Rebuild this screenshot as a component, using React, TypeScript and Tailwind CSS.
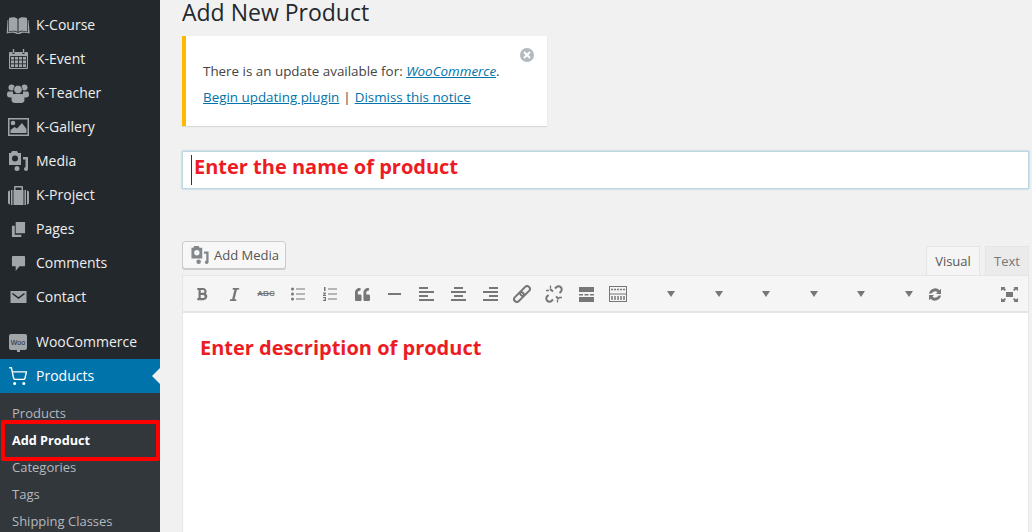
import type { ReactNode } from "react";
import { FaBold, FaItalic, FaQuoteLeft } from "react-icons/fa";
import { ShoppingCart } from "lucide-react";

const OPEN_SANS = "font-['Open_Sans',sans-serif]";

function MediaIcon({ className }: { className?: string }) {
	return (
		<svg viewBox="0 0 19 20" className={className} fill="currentColor">
			<path fillRule="evenodd" d="M3 0h5l1 2h3v12H0V2h2zM6 4.500a3 3 0 1 0 0 6 3 3 0 0 0 0-6z" />
			<path d="M14 6h5v12a2 2 0 1 1-2.500-2V8.500H14z" />
			<circle cx="8" cy="17.500" r="2.500" />
		</svg>
	);
}

function BookIcon() {
	return (
		<svg viewBox="0 0 24 17" className="w-[24px] h-[17px]" fill="currentColor">
			<path d="M3 1c3-1 7-1 8.500 1v13C10 13.500 6 13.500 3 14.500z" />
			<path d="M21 1c-3-1-7-1-8.500 1v13c1.500-1.500 5.500-1.500 8.500-.500z" />
			<path d="M1.500 3H2.300v12.200c3-1 7-1 9.700.800 2.700-1.800 6.700-1.800 9.700-.800V3h.800l1.200 13.500c-4-1-8-.800-10 .500h-3c-2-1.300-6-1.500-10-.500z" />
		</svg>
	);
}

function CalendarIcon() {
	return (
		<svg viewBox="0 0 19 20" className="w-[19px] h-[20px]">
			<path fill="currentColor" d="M1 3h2.500v2h2V3h8v2h2V3H18a1 1 0 0 1 1 1v15a1 1 0 0 1-1 1H1a1 1 0 0 1-1-1V4a1 1 0 0 1 1-1z" />
			<path fill="currentColor" d="M3.800 0h1.400v4H3.800zM13.800 0h1.400v4h-1.400z" />
			<path fill="none" stroke="#23282d" strokeWidth="0.900" d="M1.500 7.500h16v11h-16zM1.500 11h16M1.500 14.800h16M5.500 7.500v11M9.500 7.500v11M13.500 7.500v11" />
		</svg>
	);
}

function UsersIcon() {
	return (
		<svg viewBox="0 0 22 19" className="w-[22px] h-[19px]" fill="currentColor">
			<circle cx="4.500" cy="3.500" r="3" />
			<circle cx="17.500" cy="3.500" r="3" />
			<path d="M1.500 7.500h4.500v6H3c-2 0-3-1-3-2.500 0-2 .5-3.500 1.500-3.500zM16 7.500h4.500c1 0 1.500 1.500 1.500 3.500 0 1.500-1 2.500-3 2.500h-3z" />
			<circle cx="11" cy="5.500" r="4.300" stroke="#23282d" strokeWidth="0.800" />
			<path d="M6.800 10h8.400c1.500 0 2.300 2 2.300 5.500 0 2-1 3.500-3.500 3.500H8c-2.500 0-3.500-1.500-3.500-3.500C4.500 12 5.300 10 6.800 10z" />
		</svg>
	);
}

function GalleryIcon() {
	return (
		<svg viewBox="0 0 21 18" className="w-[21px] h-[18px]" fill="currentColor">
			<path fillRule="evenodd" d="M0 0h21v18H0zM1.500 1.500v15h18v-15z" />
			<circle cx="5" cy="5" r="2.300" />
			<path d="M2.500 15v-3l4-3 2.500 1.500L14 5l4.500 6v4z" />
		</svg>
	);
}

function SuitcaseIcon() {
	return (
		<svg viewBox="0 0 21 19" className="w-[21px] h-[19px]" fill="currentColor">
			<path fillRule="evenodd" d="M7 0h7a1 1 0 0 1 1 1v3h-1.500V1.500h-6V4H6V1a1 1 0 0 1 1-1z" />
			<path d="M5.500 4h10v15h-10zM3 4h1.500v15H3zM16.500 4H18v15h-1.500z" />
			<path d="M2 4.500v14C.7 18.500 0 17.800 0 16.500v-10C0 5.200.7 4.500 2 4.500zM19 4.500v14c1.300 0 2-.7 2-2v-10c0-1.300-.7-2-2-2z" />
		</svg>
	);
}

function PagesIcon() {
	return (
		<svg viewBox="0 0 16 18" className="w-[15px] h-[17px]" fill="currentColor">
			<path d="M5 1h10v12H5z" />
			<path d="M1 5h3v9.500h7V17H1z" />
		</svg>
	);
}

function CommentIcon() {
	return (
		<svg viewBox="0 0 16 18" className="w-[15px] h-[17px]" fill="currentColor">
			<path d="M2 1h12a1 1 0 0 1 1 1v9a1 1 0 0 1-1 1H9l-4 5v-5H2a1 1 0 0 1-1-1V2a1 1 0 0 1 1-1z" />
		</svg>
	);
}

function MailIcon() {
	return (
		<svg viewBox="0 0 16 12" className="w-[17px] h-[12px]">
			<rect width="16" height="12" fill="currentColor" />
			<path d="M2 2.500l6 4.500 6-4.500" fill="none" stroke="#23282d" strokeWidth="1.500" />
		</svg>
	);
}

function WooIcon() {
	return (
		<div className="relative w-[18px] h-[16px] rounded-[2px] bg-[#a0a5aa] flex items-center justify-center">
			<span className="text-[7px] leading-none text-[#23282d] font-['Liberation_Sans',sans-serif]">Woo</span>
			<span className="absolute left-[8px] -bottom-[2px] w-[3px] h-[3px] bg-[#a0a5aa]" />
		</div>
	);
}

function MenuItem({ icon, label, active }: { icon: ReactNode; label: string; active?: boolean }) {
	return (
		<div className={`relative h-[34px] flex items-center ${active ? "bg-[#0073aa] text-white" : "text-[#eeeeee]"}`}>
			<div className={`w-[36px] flex justify-center pl-[3px] pr-[3px] ${active ? "text-white" : "text-[#a0a5aa]"}`}>{icon}</div>
			<span className="text-[14px] leading-none">{label}</span>
			{active && (
				<span className="absolute right-0 top-[9px] border-y-[8px] border-r-[8px] border-y-transparent border-r-[#f1f1f1]" />
			)}
		</div>
	);
}

function SubItem({ label, bold }: { label: string; bold?: boolean }) {
	return (
		<div className={`h-[27px] pl-[12px] flex items-center ${bold ? "text-[12.7px] font-bold text-white" : "text-[13px] text-[#b4b9be]"}`}>
			{label}
		</div>
	);
}

function Lines({ align }: { align: "left" | "center" | "right" }) {
	return (
		<svg viewBox="0 0 15 14" className="w-[15px] h-[14px]" stroke="currentColor" strokeWidth="2" fill="none">
			<path d={align === "left" ? "M0 1h9M0 9h9" : align === "center" ? "M3 1h9M3 9h9" : "M6 1h9M6 9h9"} />
			<path d="M0 5h15M0 13h15" />
		</svg>
	);
}

function BulletList() {
	return (
		<svg viewBox="0 0 14 14" className="w-[14px] h-[14px]" fill="currentColor">
			<circle cx="1.500" cy="2" r="1.500" />
			<circle cx="1.500" cy="7" r="1.500" />
			<circle cx="1.500" cy="12" r="1.500" />
			<path d="M5 1.500h9v1H5zM5 6.500h9v1H5zM5 11.500h9v1H5z" />
		</svg>
	);
}

function NumberList() {
	return (
		<svg viewBox="0 0 14 14" className="w-[14px] h-[14px]" fill="currentColor">
			<path d="M1 0h1.500v4H1zM0 5.500h3v1L1.500 8H3v1H0V8l1.500-1.500H0zM0 10h3v4H0v-1h2v-.5H.8v-.8H2V11H0z" />
			<path d="M5 1.500h9v1H5zM5 6.500h9v1H5zM5 11.500h9v1H5z" />
		</svg>
	);
}

function LinkIcon() {
	return (
		<svg viewBox="0 0 18 18" className="w-[18px] h-[18px]" fill="none" stroke="currentColor" strokeWidth="2">
			<g transform="rotate(-45 9 9)">
				<rect x="-1" y="6.200" width="11.500" height="5.600" rx="2.800" />
				<rect x="7.500" y="6.200" width="11.500" height="5.600" rx="2.800" />
			</g>
		</svg>
	);
}

function UnlinkIcon() {
	return (
		<svg viewBox="0 0 18 18" className="w-[18px] h-[18px]" fill="none" stroke="currentColor" strokeWidth="2">
			<path d="M10 3.500l1.300-1.300a3 3 0 0 1 4.500 4.500L14.500 8" />
			<path d="M8 14.500l-1.300 1.300a3 3 0 0 1-4.500-4.500L3.500 10" />
			<path d="M8 6.500L5 4M11 11.500l3 2.500" />
			<path strokeWidth="1.300" d="M1 5.500h3M5.500 0.500v3M17 12.500h-3M12.500 17.500v-3M9 9l.1.1" />
		</svg>
	);
}

function SyncIcon() {
	return (
		<svg viewBox="0 0 18 15" className="w-[18px] h-[15px]" fill="currentColor">
			<path d="M3 6.500a6.200 6.200 0 0 1 10.500-3.300L15 1.800V7h-5l1.500-1.700A3.700 3.700 0 0 0 5.600 6.500z" />
			<path d="M15 8.500a6.200 6.200 0 0 1-10.500 3.300L3 13.200V8h5l-1.500 1.700a3.700 3.700 0 0 0 5.900-1.200z" />
		</svg>
	);
}

function FullscreenIcon() {
	return (
		<svg viewBox="0 0 17 15" className="w-[17px] h-[15px]" fill="currentColor">
			<path d="M5 5h7v5H5z" />
			<path d="M0 0h4.500L3.400 1.100 5 2.700 3.700 4 2 2.400 0 4zM17 0h-4.500l1.100 1.100L12 2.700 13.300 4 15 2.400 17 4zM0 15h4.500l-1.100-1.100L5 12.300 3.700 11 2 12.600 0 11zM17 15h-4.500l1.100-1.100-1.600-1.600 1.300-1.300 1.700 1.600 2-1.600z" />
		</svg>
	);
}

function Tool({ children }: { children: ReactNode }) {
	return <div className="w-[32px] h-[36px] flex items-center justify-center shrink-0 pt-[1px]">{children}</div>;
}

function Arrow({ first }: { first?: boolean }) {
	return (
		<div className={`${first ? "w-[41px]" : "w-[47.6px]"} flex justify-end shrink-0`}>
			<span className="border-x-[4px] border-t-[6px] border-x-transparent border-t-[#777777]" />
		</div>
	);
}

export default function App() {
	return (
		<div className={`w-[1032px] h-[532px] overflow-hidden flex bg-[#f1f1f1] ${OPEN_SANS}`}>
			<aside className="relative w-[160px] h-full shrink-0 bg-[#23282d] pt-[8px]">
				<MenuItem icon={<BookIcon />} label="K-Course" />
				<MenuItem icon={<CalendarIcon />} label="K-Event" />
				<MenuItem icon={<UsersIcon />} label="K-Teacher" />
				<MenuItem icon={<GalleryIcon />} label="K-Gallery" />
				<MenuItem icon={<MediaIcon className="w-[19px] h-[20px]" />} label="Media" />
				<MenuItem icon={<SuitcaseIcon />} label="K-Project" />
				<MenuItem icon={<PagesIcon />} label="Pages" />
				<MenuItem icon={<CommentIcon />} label="Comments" />
				<MenuItem icon={<MailIcon />} label="Contact" />
				<div className="h-[11px]" />
				<MenuItem icon={<WooIcon />} label="WooCommerce" />
				<MenuItem icon={<ShoppingCart size={20} strokeWidth={1.7} />} label="Products" active />
				<div className="bg-[#32373c] pt-[7px] h-full">
					<SubItem label="Products" />
					<SubItem label="Add Product" bold />
					<SubItem label="Categories" />
					<SubItem label="Tags" />
					<SubItem label="Shipping Classes" />
				</div>
				<div className="absolute left-[1px] top-[420px] w-[159px] h-[41px] border-[4px] border-[#ff0000] rounded-[2px]" />
			</aside>

			<main className="flex-1 min-w-0 pl-[22px] pr-[3px]">
				<h1 className="h-[24px] text-[23px] leading-[24px] text-[#23282d]">Add New Product</h1>

				<div className="relative mt-[12px] w-[365px] h-[90px] bg-white border-l-[4px] border-[#ffb900] shadow-[0_1px_1px_rgba(0,0,0,0.1)] pl-[17px] pt-[22px] text-[13.4px] leading-[26px] text-[#444444]">
					<p>
						There is an update available for:{" "}
						<a className="italic text-[#0073aa] underline">WooCommerce</a>.
					</p>
					<p>
						<a className="text-[#0073aa] underline">Begin updating plugin</a>
						<span className="mx-[4px]">|</span>
						<a className="text-[#0073aa] underline">Dismiss this notice</a>
					</p>
					<div className="absolute right-[13px] top-[12px] w-[14px] h-[14px] rounded-full bg-[#b4b9be] flex items-center justify-center">
						<svg viewBox="0 0 8 8" className="w-[8px] h-[8px]" stroke="white" strokeWidth="2">
							<path d="M1 1l6 6M7 1L1 7" />
						</svg>
					</div>
				</div>

				<div className="mt-[25px] h-[38px] bg-white border border-[#bcd6e2] shadow-[0_0_2px_rgba(30,140,190,0.4)] flex items-center pl-[8px]">
					<span className="w-[1px] h-[30px] bg-[#333333] mr-[2px]" />
					<span className="text-[20px] font-bold text-[#ed1c24] leading-none pb-[6px]">Enter the name of product</span>
				</div>

				<div className="mt-[52px] flex items-end justify-between">
					<button className="mb-[6px] h-[28px] w-[104px] flex items-center pl-[8px] gap-[5px] bg-[#f7f7f7] border border-[#cccccc] rounded-[3px] shadow-[0_1px_0_#cccccc] text-[13px] text-[#555555]">
						<MediaIcon className="w-[18px] h-[18px] text-[#82878c]" />
						<span className="pt-[1px]">Add Media</span>
					</button>
					<div className="flex gap-[5px] pr-0 text-[13px]">
						<div className="w-[54px] h-[29px] flex items-center justify-center bg-[#f5f5f5] border border-b-0 border-[#e5e5e5] text-[#555555] pt-[2px]">Visual</div>
						<div className="w-[44px] h-[29px] flex items-center justify-center bg-[#ebebeb] border border-b-0 border-[#e5e5e5] text-[#777777] pt-[2px]">Text</div>
					</div>
				</div>

				<div className="h-[38px] bg-[#f5f5f5] border border-[#e5e5e5] border-b-[2px] pl-[3px] pr-[3px] flex items-center text-[#777777]">
					<Tool><FaBold size={14} /></Tool>
					<Tool><FaItalic size={15} /></Tool>
					<Tool><span className="text-[8px] line-through leading-none font-bold font-['Liberation_Sans',sans-serif]">ABC</span></Tool>
					<Tool><BulletList /></Tool>
					<Tool><NumberList /></Tool>
					<Tool><FaQuoteLeft size={15} /></Tool>
					<Tool><span className="w-[13px] h-[2px] bg-[#777777]" /></Tool>
					<Tool><Lines align="left" /></Tool>
					<Tool><Lines align="center" /></Tool>
					<Tool><Lines align="right" /></Tool>
					<Tool><LinkIcon /></Tool>
					<Tool><UnlinkIcon /></Tool>
					<Tool>
						<svg viewBox="0 0 15 15" className="w-[15px] h-[15px]" fill="currentColor">
							<path d="M0 0h15v5H0zM0 10h15v5H0zM0 7h4v1.500H0zM5.500 7h4v1.500h-4zM11 7h4v1.500h-4z" />
						</svg>
					</Tool>
					<Tool>
						<svg viewBox="0 0 18 16" className="w-[18px] h-[16px]" fill="none" stroke="currentColor">
							<rect x="0.500" y="0.500" width="17" height="15" />
							<path d="M0 8h18" />
							<path d="M2 3.500h14M2 11h14M2 13h14" strokeWidth="1.500" strokeDasharray="2 1" />
						</svg>
					</Tool>
					<Arrow first />
					<Arrow />
					<Arrow />
					<Arrow />
					<Arrow />
					<Arrow />
					<div className="ml-[6px]"><Tool><SyncIcon /></Tool></div>
					<div className="ml-auto">
						<Tool><FullscreenIcon /></Tool>
					</div>
				</div>

				<div className="h-[220px] bg-white border-x border-[#e5e5e5] pl-[17px] pt-[21px]">
					<p className="text-[20px] font-bold text-[#ed1c24] leading-[28px]">Enter description of product</p>
				</div>
			</main>
		</div>
	);
}
